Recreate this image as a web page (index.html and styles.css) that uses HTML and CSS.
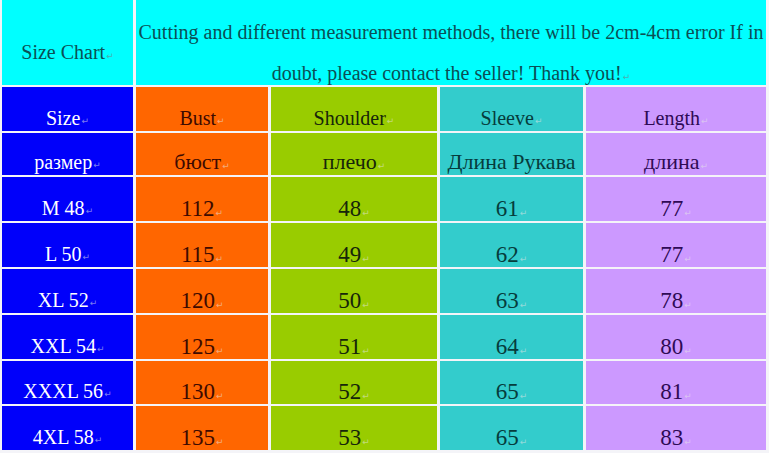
FILE: index.html
```html
<!DOCTYPE html>
<html>
<head>
<meta charset="utf-8">
<link rel="stylesheet" href="styles.css">
</head>
<body>
<div class="chart">
  <div class="cell head title">Size Chart<span class="mk">↵</span></div>
  <div class="cell head note">Cutting and different measurement methods, there will be 2cm-4cm error If in<br>doubt, please contact the seller! Thank you!<span class="mk">↵</span></div>

  <div class="cell c1 lbl">Size<span class="mk">↵</span></div>
  <div class="cell c2 lbl">Bust<span class="mk">↵</span></div>
  <div class="cell c3 lbl">Shoulder<span class="mk">↵</span></div>
  <div class="cell c4 lbl">Sleeve<span class="mk">↵</span></div>
  <div class="cell c5 lbl">Length<span class="mk">↵</span></div>

  <div class="cell c1 lbl">размер<span class="mk">↵</span></div>
  <div class="cell c2 ru">бюст<span class="mk">↵</span></div>
  <div class="cell c3 ru">плечо<span class="mk">↵</span></div>
  <div class="cell c4 ru">Длина Рукава</div>
  <div class="cell c5 ru">длина<span class="mk">↵</span></div>

  <div class="cell c1 sz">M 48<span class="mk">↵</span></div>
  <div class="cell c2 num">112<span class="mk">↵</span></div>
  <div class="cell c3 num">48<span class="mk">↵</span></div>
  <div class="cell c4 num">61<span class="mk">↵</span></div>
  <div class="cell c5 num">77<span class="mk">↵</span></div>

  <div class="cell c1 sz">L 50<span class="mk">↵</span></div>
  <div class="cell c2 num">115<span class="mk">↵</span></div>
  <div class="cell c3 num">49<span class="mk">↵</span></div>
  <div class="cell c4 num">62<span class="mk">↵</span></div>
  <div class="cell c5 num">77<span class="mk">↵</span></div>

  <div class="cell c1 sz">XL 52<span class="mk">↵</span></div>
  <div class="cell c2 num">120<span class="mk">↵</span></div>
  <div class="cell c3 num">50<span class="mk">↵</span></div>
  <div class="cell c4 num">63<span class="mk">↵</span></div>
  <div class="cell c5 num">78<span class="mk">↵</span></div>

  <div class="cell c1 sz">XXL 54<span class="mk">↵</span></div>
  <div class="cell c2 num">125<span class="mk">↵</span></div>
  <div class="cell c3 num">51<span class="mk">↵</span></div>
  <div class="cell c4 num">64<span class="mk">↵</span></div>
  <div class="cell c5 num">80<span class="mk">↵</span></div>

  <div class="cell c1 sz">XXXL 56<span class="mk">↵</span></div>
  <div class="cell c2 num">130<span class="mk">↵</span></div>
  <div class="cell c3 num">52<span class="mk">↵</span></div>
  <div class="cell c4 num">65<span class="mk">↵</span></div>
  <div class="cell c5 num">81<span class="mk">↵</span></div>

  <div class="cell c1 sz">4XL 58<span class="mk">↵</span></div>
  <div class="cell c2 num">135<span class="mk">↵</span></div>
  <div class="cell c3 num">53<span class="mk">↵</span></div>
  <div class="cell c4 num">65<span class="mk">↵</span></div>
  <div class="cell c5 num">83<span class="mk">↵</span></div>
</div>
</body>
</html>
```

FILE: styles.css
```css
html, body {
  margin: 0;
  padding: 0;
  background: #f4f4f8;
}
body {
  width: 769px;
  height: 453px;
  overflow: hidden;
  font-family: "Liberation Serif", "DejaVu Serif", serif;
}
.chart {
  display: grid;
  grid-template-columns: 131px 132px 166px 143px 180px;
  grid-template-rows: 85px 44px 42px 44px 44px 44px 44px 43px 44px;
  column-gap: 3px;
  row-gap: 2px;
  padding-left: 2px;
}
.cell {
  display: flex;
  justify-content: center;
  align-items: flex-end;
  box-sizing: border-box;
  white-space: nowrap;
  font-family: "Liberation Serif", "DejaVu Serif", serif;
}
.head {
  background: #00ffff;
  color: #0b4f55;
  font-size: 19px;
}
.title {
  display: block;
  text-align: center;
  padding-top: 42px;
  line-height: 20px;
  font-size: 20px;
}
.note {
  grid-column: 2 / 6;
  display: block;
  text-align: center;
  line-height: 41px;
  padding-top: 12px;
  font-size: 20px;
  white-space: normal;
}
.c1 { background: #0000fa; color: #ffffff; }
.c2 { background: #ff6600; color: #3d0a00; }
.c3 { background: #99cc00; color: #16260a; }
.c4 { background: #33cccc; color: #063c3c; }
.c5 { background: #cc99ff; color: #2e0a55; }
.lbl {
  font-size: 20px;
  line-height: 20px;
  padding-bottom: 3px;
}
.ru {
  font-size: 22px;
  line-height: 22px;
  padding-bottom: 2px;
}
.sz {
  font-size: 20px;
  line-height: 20px;
  padding-bottom: 3px;
}
.num {
  font-size: 23px;
  line-height: 22px;
  padding-bottom: 1px;
}
.mk {
  font-family: "DejaVu Sans", sans-serif;
  font-size: 9px;
  line-height: 10px;
  color: rgba(230, 230, 230, 0.55);
  margin-left: 1px;
  align-self: flex-end;
  padding-bottom: 2px;
}
.note .mk, .title .mk {
  color: rgba(120, 120, 120, 0.6);
}
```
